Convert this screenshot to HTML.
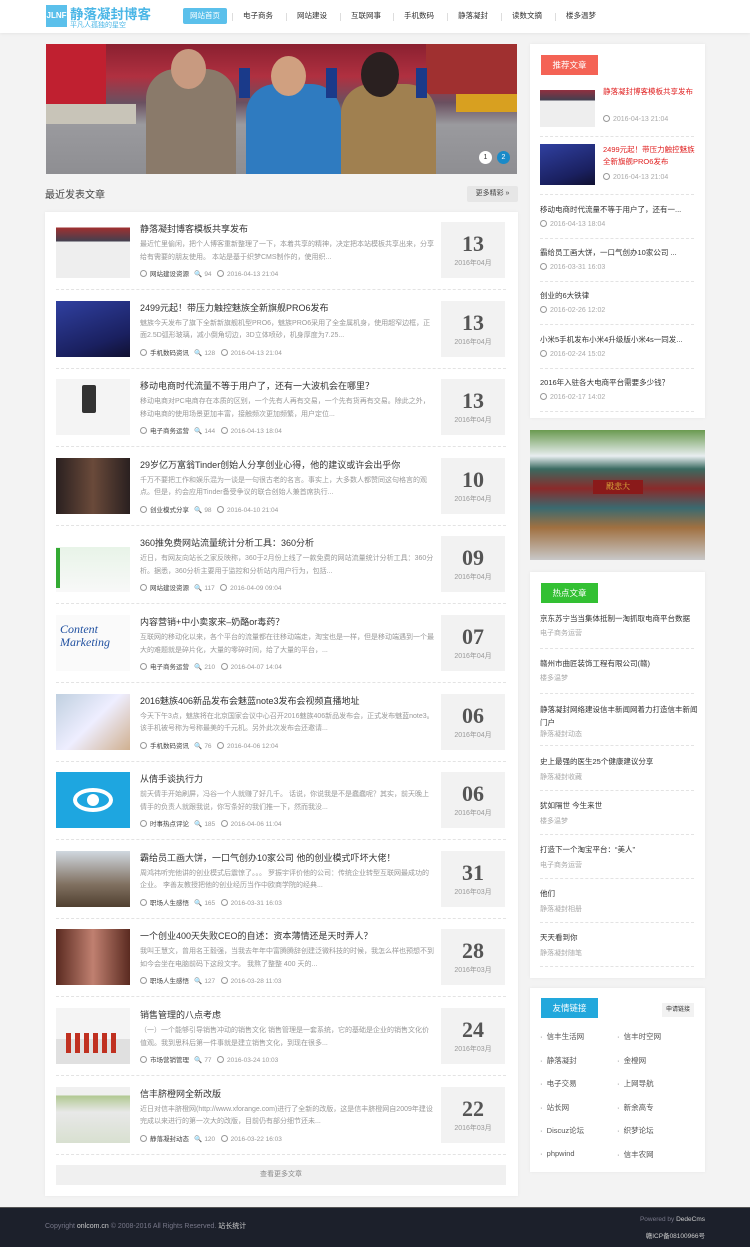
<!DOCTYPE html>
<html><head><meta charset="utf-8">
<style>
*{margin:0;padding:0;box-sizing:border-box}
body{width:750px;height:1247px;background:#f3f3f3;font-family:"Liberation Sans","Noto Sans CJK SC",sans-serif;color:#333;position:relative;overflow:hidden}
.hd{position:absolute;left:0;top:0;width:750px;height:33px;background:#fff;box-shadow:0 1px 3px rgba(0,0,0,.06)}
.logo{position:absolute;left:46px;top:5px;width:97px;height:24px}
.logo .ic{position:absolute;left:0;top:0;width:21px;height:22px;background:#5bc0eb;color:#fff;font-size:8px;font-weight:bold;line-height:22px;text-align:center}
.logo .t1{position:absolute;left:24px;top:-2px;font-size:13.5px;color:#4ab6e6;font-weight:bold;white-space:nowrap}
.logo .t2{position:absolute;left:24px;top:15px;font-size:7px;color:#4ab6e6;white-space:nowrap}
.nav{position:absolute;left:0;top:8px;font-size:7.5px;color:#333}
.nav span{position:absolute;top:0;height:16px;line-height:16px;white-space:nowrap}
.nav .on{background:#5bc0eb;color:#fff;border-radius:2px;width:44px;text-align:center;left:183px}
.sep{position:absolute;top:5px;width:1px;height:8px;background:#ddd}
.banner{position:absolute;left:46px;top:44px;width:471px;height:130px;overflow:hidden;background:linear-gradient(180deg,#8a2030 0%,#b03040 25%,#6a5060 45%,#9a9a9e 62%,#8e8e92 100%)}
.card{position:absolute;background:#fff;box-shadow:0 0 3px rgba(0,0,0,.06)}
.item{position:absolute;left:11px;width:450px;height:78px;border-bottom:1px dashed #e3e3e3}
.th{position:absolute;left:0;top:10px;width:74px;height:56px}
.tt{position:absolute;left:84px;top:10px;font-size:9px;color:#333;white-space:nowrap}
.ds{position:absolute;left:84px;top:27px;width:295px;font-size:7px;line-height:12.5px;color:#999;height:25px;overflow:hidden}
.mt{position:absolute;left:84px;top:56px;font-size:6.5px;color:#999;white-space:nowrap}
.mt b{font-weight:normal;color:#444}
.ci{display:inline-block;width:7px;height:7px;border:1px solid #999;border-radius:50%;vertical-align:-1px;margin-right:3px}
.db{position:absolute;left:385px;top:10px;width:64px;height:56px;background:#f2f2f2;text-align:center}
.db .n{font-family:"Liberation Serif",serif;font-weight:bold;font-size:22px;color:#555;line-height:22px;margin-top:11px}
.db .m{font-size:7px;color:#999;margin-top:3px}
.sb{position:absolute;font-size:7.5px;color:#333;white-space:nowrap}
.sm{color:#aaa;font-size:7px}
.dl{position:absolute;left:10px;width:154px;border-top:1px dashed #e3e3e3}
.tag{position:absolute;left:11px;width:57px;height:20px;color:#fff;font-size:8.5px;line-height:20px;text-align:center}
.ft{position:absolute;left:0;top:1207px;width:750px;height:40px;background:#1c202b;border-top:1px solid #555}
</style></head><body>
<div class="hd">
 <div class="logo"><div class="ic">JLNF</div><div class="t1">静落凝封博客</div><div class="t2">平凡人孤独的星空</div></div>
 <div class="nav">
  <span class="on">网站首页</span>
  <i class="sep" style="left:232px"></i><span style="left:243px">电子商务</span>
  <i class="sep" style="left:286px"></i><span style="left:297px">网站建设</span>
  <i class="sep" style="left:340px"></i><span style="left:351px">互联网事</span>
  <i class="sep" style="left:393px"></i><span style="left:404px">手机数码</span>
  <i class="sep" style="left:447px"></i><span style="left:458px">静落凝封</span>
  <i class="sep" style="left:501px"></i><span style="left:512px">读数文摘</span>
  <i class="sep" style="left:555px"></i><span style="left:566px">楼多温梦</span>
 </div>
</div>

<div class="banner">
 <div style="position:absolute;left:0;top:0;width:60px;height:60px;background:#c02030"></div>
 <div style="position:absolute;left:380px;top:0;width:91px;height:50px;background:#a03030"></div>
 <div style="position:absolute;left:0;top:60px;width:90px;height:20px;background:#c8c4b8"></div>
 <div style="position:absolute;left:410px;top:50px;width:61px;height:18px;background:#d8a020"></div>
 <div style="position:absolute;left:100px;top:25px;width:90px;height:105px;background:#8a7a6a;border-radius:30px 30px 0 0"></div>
 <div style="position:absolute;left:125px;top:5px;width:35px;height:40px;background:#c89a80;border-radius:50%"></div>
 <div style="position:absolute;left:200px;top:40px;width:95px;height:90px;background:#2f7bc0;border-radius:30px 30px 0 0"></div>
 <div style="position:absolute;left:225px;top:12px;width:35px;height:40px;background:#d0a080;border-radius:50%"></div>
 <div style="position:absolute;left:295px;top:40px;width:95px;height:90px;background:#a08050;border-radius:30px 30px 0 0"></div>
 <div style="position:absolute;left:315px;top:8px;width:38px;height:45px;background:#2a2020;border-radius:50%"></div>
 <div style="position:absolute;left:193px;top:24px;width:11px;height:30px;background:#1a3a8a"></div>
 <div style="position:absolute;left:280px;top:24px;width:11px;height:30px;background:#1a3a8a"></div>
 <div style="position:absolute;left:370px;top:24px;width:11px;height:30px;background:#1a3a8a"></div>
 <div style="position:absolute;left:433px;top:107px;width:13px;height:13px;background:#fff;border-radius:50%;font-size:7px;text-align:center;line-height:13px">1</div>
 <div style="position:absolute;left:451px;top:107px;width:13px;height:13px;background:#1a8ac8;color:#fff;border-radius:50%;font-size:7px;text-align:center;line-height:13px">2</div>
</div>

<div style="position:absolute;left:45px;top:186px;font-size:10px;color:#444">最近发表文章</div>
<div style="position:absolute;left:467px;top:186px;width:51px;height:16px;background:#e6e6e6;border-radius:2px;font-size:7px;line-height:16px;text-align:center;color:#444">更多精彩 »</div>

<div class="card" style="left:45px;top:212px;width:473px;height:984px">
 <div class="item" style="top:0"><div class="th" style="background:linear-gradient(#fff 0,#fff 10%,#a03030 10%,#404050 35%,#eee 35%)"></div><div class="tt">静落凝封博客模板共享发布</div><div class="ds">最近忙里偷闲，把个人博客重新整理了一下，本着共享的精神，决定把本站模板共享出来，分享给有需要的朋友使用。 本站是基于织梦CMS制作的，使用织...</div><div class="mt"><span class="ci"></span><b>网站建设资源</b> &nbsp; 🔍 94 &nbsp; <span class="ci"></span>2016-04-13 21:04</div><div class="db"><div class="n">13</div><div class="m">2016年04月</div></div></div>
 <div class="item" style="top:78.6px"><div class="th" style="background:linear-gradient(160deg,#3040a0,#1a2060 70%,#101030)"></div><div class="tt">2499元起！带压力触控魅族全新旗舰PRO6发布</div><div class="ds">魅族今天发布了旗下全新新旗舰机型PRO6，魅族PRO6采用了全金属机身，使用超窄边框，正面2.5D弧形玻璃，减小倒角切边，3D立体喷砂，机身厚度为7.25...</div><div class="mt"><span class="ci"></span><b>手机数码资讯</b> &nbsp; 🔍 128 &nbsp; <span class="ci"></span>2016-04-13 21:04</div><div class="db"><div class="n">13</div><div class="m">2016年04月</div></div></div>
 <div class="item" style="top:157.2px"><div class="th" style="background:#f4f4f4"><div style="position:absolute;left:26px;top:6px;width:14px;height:28px;background:#333;border-radius:2px"></div></div><div class="tt">移动电商时代流量不等于用户了，还有一大波机会在哪里？</div><div class="ds">移动电商对PC电商存在本质的区别，一个先有人再有交易，一个先有货再有交易。除此之外，移动电商的使用场景更加丰富，接触频次更加频繁，用户定位...</div><div class="mt"><span class="ci"></span><b>电子商务运营</b> &nbsp; 🔍 144 &nbsp; <span class="ci"></span>2016-04-13 18:04</div><div class="db"><div class="n">13</div><div class="m">2016年04月</div></div></div>
 <div class="item" style="top:235.8px"><div class="th" style="background:linear-gradient(90deg,#2a2020,#6a4a3a 50%,#2a2020)"></div><div class="tt">29岁亿万富翁Tinder创始人分享创业心得，他的建议或许会出乎你</div><div class="ds">千万不要把工作和娱乐混为一谈是一句很古老的名言。事实上，大多数人都赞同这句格言的观点。但是，约会应用Tinder备受争议的联合创始人兼首席执行...</div><div class="mt"><span class="ci"></span><b>创业模式分享</b> &nbsp; 🔍 98 &nbsp; <span class="ci"></span>2016-04-10 21:04</div><div class="db"><div class="n">10</div><div class="m">2016年04月</div></div></div>
 <div class="item" style="top:314.4px"><div class="th" style="background:linear-gradient(#fff 0,#fff 20%,#e8f4e8 20%,#f8f8f8)"><div style="position:absolute;left:0;top:12px;width:4px;height:40px;background:#3a3"></div></div><div class="tt">360推免费网站流量统计分析工具：360分析</div><div class="ds">近日，有网友向站长之家反映称，360于2月份上线了一款免费的网站流量统计分析工具：360分析。据悉，360分析主要用于监控和分析站内用户行为，包括...</div><div class="mt"><span class="ci"></span><b>网站建设资源</b> &nbsp; 🔍 117 &nbsp; <span class="ci"></span>2016-04-09 09:04</div><div class="db"><div class="n">09</div><div class="m">2016年04月</div></div></div>
 <div class="item" style="top:393px"><div class="th" style="background:#fafafa;color:#2050a0;font-family:'Liberation Serif',serif;font-style:italic;font-size:12px;line-height:13px;padding:8px 4px">Content<br>Marketing</div><div class="tt">内容营销+中小卖家来–奶酪or毒药？</div><div class="ds">互联网的移动化以来，各个平台的流量都在往移动端走，淘宝也是一样，但是移动端遇到一个最大的难题就是碎片化，大量的零碎时间，给了大量的平台，...</div><div class="mt"><span class="ci"></span><b>电子商务运营</b> &nbsp; 🔍 210 &nbsp; <span class="ci"></span>2016-04-07 14:04</div><div class="db"><div class="n">07</div><div class="m">2016年04月</div></div></div>
 <div class="item" style="top:471.6px"><div class="th" style="background:linear-gradient(135deg,#c0d0e0,#eef 50%,#d0b090)"></div><div class="tt">2016魅族406新品发布会魅蓝note3发布会视频直播地址</div><div class="ds">今天下午3点，魅族将在北京国家会议中心召开2016魅族406新品发布会，正式发布魅蓝note3。该手机被号称为号称最美的千元机。另外此次发布会还邀请...</div><div class="mt"><span class="ci"></span><b>手机数码资讯</b> &nbsp; 🔍 76 &nbsp; <span class="ci"></span>2016-04-06 12:04</div><div class="db"><div class="n">06</div><div class="m">2016年04月</div></div></div>
 <div class="item" style="top:550.2px"><div class="th" style="background:#1ea6e0"><div style="position:absolute;left:17px;top:16px;width:40px;height:24px;border:4px solid #fff;border-radius:50%"></div><div style="position:absolute;left:31px;top:22px;width:12px;height:12px;background:#fff;border-radius:50%"></div></div><div class="tt">从倩手谈执行力</div><div class="ds">前天倩手开始刷屏，冯谷一个人就赚了好几千。 话说，你说我是不是蠢蠢呢？其实，前天晚上倩手的负责人就跟我说，你写条好的我们推一下，然而我没...</div><div class="mt"><span class="ci"></span><b>时事热点评论</b> &nbsp; 🔍 185 &nbsp; <span class="ci"></span>2016-04-06 11:04</div><div class="db"><div class="n">06</div><div class="m">2016年04月</div></div></div>
 <div class="item" style="top:628.8px"><div class="th" style="background:linear-gradient(#d0d8e0,#807060 60%,#504030)"></div><div class="tt">霸给员工画大饼，一口气创办10家公司 他的创业模式吓坏大佬！</div><div class="ds">周鸿祎听完他讲的创业模式后震惊了。。。 罗振宇评价他的公司：传统企业转型互联网最成功的企业。 李善友教授把他的创业经历当作中欧商学院的经典...</div><div class="mt"><span class="ci"></span><b>职场人生感悟</b> &nbsp; 🔍 165 &nbsp; <span class="ci"></span>2016-03-31 16:03</div><div class="db"><div class="n">31</div><div class="m">2016年03月</div></div></div>
 <div class="item" style="top:707.4px"><div class="th" style="background:linear-gradient(90deg,#5a2a20,#c08070 50%,#5a2a20)"></div><div class="tt">一个创业400天失败CEO的自述：资本薄情还是天时弄人？</div><div class="ds">我叫王慧文，曾用名王毅强，当我去年年中富腾腾辞创建泛微科技的时候，我怎么样也预想不到如今会坐在电脑前码下这段文字。 我熬了整整 400 天的...</div><div class="mt"><span class="ci"></span><b>职场人生感悟</b> &nbsp; 🔍 127 &nbsp; <span class="ci"></span>2016-03-28 11:03</div><div class="db"><div class="n">28</div><div class="m">2016年03月</div></div></div>
 <div class="item" style="top:786px"><div class="th" style="background:linear-gradient(#f4f4f4 55%,#e0e0e0 55%)"><div style="position:absolute;left:10px;top:25px;width:54px;height:20px;background:repeating-linear-gradient(90deg,#c03020 0 5px,transparent 5px 9px)"></div></div><div class="tt">销售管理的八点考虑</div><div class="ds">（一）一个能够引导销售冲动的销售文化 销售管理是一套系统，它的基础是企业的销售文化价值观。我到思科后第一件事就是建立销售文化，到现在很多...</div><div class="mt"><span class="ci"></span><b>市场营销管理</b> &nbsp; 🔍 77 &nbsp; <span class="ci"></span>2016-03-24 10:03</div><div class="db"><div class="n">24</div><div class="m">2016年03月</div></div></div>
 <div class="item" style="top:864.6px"><div class="th" style="background:linear-gradient(#f0f0f0 0,#f0f0f0 15%,#b0c890 15%,#e8e8e8 45%,#d8e0d0)"></div><div class="tt">信丰脐橙网全新改版</div><div class="ds">近日对信丰脐橙网(http://www.xforange.com)进行了全新的改版，这是信丰脐橙网自2009年建设完成以来进行的第一次大的改版，目前仍有部分细节还未...</div><div class="mt"><span class="ci"></span><b>静落凝封动态</b> &nbsp; 🔍 120 &nbsp; <span class="ci"></span>2016-03-22 16:03</div><div class="db"><div class="n">22</div><div class="m">2016年03月</div></div></div>
 <div style="position:absolute;left:11px;top:953px;width:450px;height:20px;background:#f0f0f0;font-size:7px;color:#888;text-align:center;line-height:20px">查看更多文章</div>
</div>

<div class="card" style="left:530px;top:44px;width:175px;height:374px">
 <div class="tag" style="top:11px;background:#f46355">推荐文章</div>
 <div style="position:absolute;left:10px;top:42px;width:55px;height:41px;background:linear-gradient(#fff 0,#fff 10%,#903040 10%,#404050 35%,#eee 35%)"></div>
 <div class="sb" style="left:73px;top:42px;color:#e02020;white-space:normal;width:92px;line-height:12px">静落凝封博客模板共享发布</div>
 <div class="sb sm" style="left:73px;top:71px"><span class="ci"></span>2016-04-13 21:04</div>
 <div class="dl" style="top:92px"></div>
 <div style="position:absolute;left:10px;top:100px;width:55px;height:41px;background:linear-gradient(160deg,#3040a0,#1a2060 70%,#101030)"></div>
 <div class="sb" style="left:73px;top:100px;color:#e02020;white-space:normal;width:92px;line-height:12px">2499元起！带压力触控魅族全新旗舰PRO6发布</div>
 <div class="sb sm" style="left:73px;top:129px"><span class="ci"></span>2016-04-13 21:04</div>
 <div class="dl" style="top:150px"></div>
 <div class="sb" style="left:10px;top:160px">移动电商时代流量不等于用户了，还有一...</div>
 <div class="sb sm" style="left:10px;top:176px"><span class="ci"></span>2016-04-13 18:04</div>
 <div class="dl" style="top:194px"></div>
 <div class="sb" style="left:10px;top:203px">霸给员工画大饼，一口气创办10家公司 ...</div>
 <div class="sb sm" style="left:10px;top:219px"><span class="ci"></span>2016-03-31 16:03</div>
 <div class="dl" style="top:237px"></div>
 <div class="sb" style="left:10px;top:246px">创业的6大铁律</div>
 <div class="sb sm" style="left:10px;top:262px"><span class="ci"></span>2016-02-26 12:02</div>
 <div class="dl" style="top:280px"></div>
 <div class="sb" style="left:10px;top:290px">小米5手机发布小米4升级版小米4s一同发...</div>
 <div class="sb sm" style="left:10px;top:306px"><span class="ci"></span>2016-02-24 15:02</div>
 <div class="dl" style="top:324px"></div>
 <div class="sb" style="left:10px;top:333px">2016年入驻各大电商平台需要多少钱？</div>
 <div class="sb sm" style="left:10px;top:349px"><span class="ci"></span>2016-02-17 14:02</div>
 <div class="dl" style="top:367px"></div>
</div>

<div style="position:absolute;left:530px;top:430px;width:175px;height:130px;background:linear-gradient(#6a9a50 0,#e8eef0 20%,#3a6a60 30%,#8a2a2a 45%,#3a6a70 60%,#a07040 75%,#c8c8c8 100%)">
 <div style="position:absolute;left:63px;top:50px;width:50px;height:14px;background:#8a1a1a;color:#e8c040;font-size:8px;text-align:center;line-height:14px;font-family:'Noto Serif CJK SC',serif">殿悲大</div>
</div>

<div class="card" style="left:530px;top:572px;width:175px;height:406px">
 <div class="tag" style="top:11px;background:#33c033">热点文章</div>
 <div class="sb" style="left:10px;top:41px">京东苏宁当当集体抵制一淘抓取电商平台数据</div><div class="sb sm" style="left:10px;top:56px">电子商务运营</div><div class="dl" style="top:76px"></div>
 <div class="sb" style="left:10px;top:86px">赣州市曲匠装饰工程有限公司(赣)</div><div class="sb sm" style="left:10px;top:101px">楼多温梦</div><div class="dl" style="top:121px"></div>
 <div class="sb" style="left:10px;top:131px;white-space:normal;width:160px;line-height:13px">静落凝封网络建设信丰新闻网着力打造信丰新闻门户</div><div class="sb sm" style="left:10px;top:157px">静落凝封动态</div><div class="dl" style="top:173px"></div>
 <div class="sb" style="left:10px;top:184px">史上最强的医生25个健康建议分享</div><div class="sb sm" style="left:10px;top:200px">静落凝封收藏</div><div class="dl" style="top:218px"></div>
 <div class="sb" style="left:10px;top:228px">犹如隔世 今生来世</div><div class="sb sm" style="left:10px;top:244px">楼多温梦</div><div class="dl" style="top:262px"></div>
 <div class="sb" style="left:10px;top:272px">打造下一个淘宝平台：“美人”</div><div class="sb sm" style="left:10px;top:288px">电子商务运营</div><div class="dl" style="top:306px"></div>
 <div class="sb" style="left:10px;top:316px">他们</div><div class="sb sm" style="left:10px;top:332px">静落凝封相册</div><div class="dl" style="top:350px"></div>
 <div class="sb" style="left:10px;top:360px">天天看到你</div><div class="sb sm" style="left:10px;top:376px">静落凝封随笔</div><div class="dl" style="top:394px"></div>
</div>

<div class="card" style="left:530px;top:988px;width:175px;height:184px">
 <div class="tag" style="top:10px;background:#22a8dc">友情链接</div>
 <div style="position:absolute;left:132px;top:15px;width:32px;height:14px;background:#f2f2f2;font-size:6px;line-height:14px;text-align:center">申请链接</div>
 <div class="sb" style="left:10px;top:43px;color:#555">· &nbsp;信丰生活网</div><div class="sb" style="left:87px;top:43px;color:#555">· &nbsp;信丰时空网</div>
 <div class="sb" style="left:10px;top:67px;color:#555">· &nbsp;静落凝封</div><div class="sb" style="left:87px;top:67px;color:#555">· &nbsp;金橙网</div>
 <div class="sb" style="left:10px;top:90px;color:#555">· &nbsp;电子交易</div><div class="sb" style="left:87px;top:90px;color:#555">· &nbsp;上网导航</div>
 <div class="sb" style="left:10px;top:114px;color:#555">· &nbsp;站长网</div><div class="sb" style="left:87px;top:114px;color:#555">· &nbsp;新余高专</div>
 <div class="sb" style="left:10px;top:137px;color:#555">· &nbsp;Discuz论坛</div><div class="sb" style="left:87px;top:137px;color:#555">· &nbsp;织梦论坛</div>
 <div class="sb" style="left:10px;top:161px;color:#555">· &nbsp;phpwind</div><div class="sb" style="left:87px;top:161px;color:#555">· &nbsp;信丰农网</div>
</div>

<div class="ft">
 <div style="position:absolute;left:45px;top:13px;font-size:7px;color:#778">Copyright <span style="color:#ccc">onlcom.cn</span> © 2008-2016 All Rights Reserved. <span style="color:#ccc">站长统计</span></div>
 <div style="position:absolute;right:45px;top:8px;font-size:6.5px;color:#778">Powered by <span style="color:#ccc">DedeCms</span></div>
 <div style="position:absolute;right:45px;top:22px;font-size:6.5px;color:#ccc">赣ICP备08100966号</div>
</div>
</body></html>
